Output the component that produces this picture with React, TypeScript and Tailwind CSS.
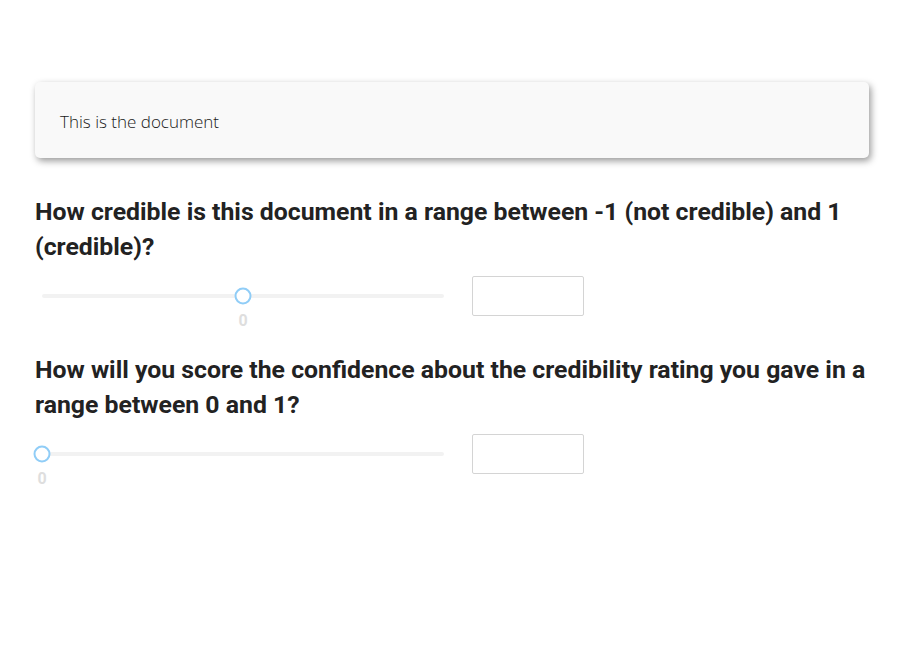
import React from "react";

function Slider({ pct }: { pct: number }) {
  return (
    <div className="relative ml-[7px] h-10 w-[402px] flex items-center">
      <div className="h-[4px] w-full rounded-full bg-[#f2f2f2]" />
      <div
        className="absolute top-1/2 h-[17px] w-[17px] -translate-x-1/2 -translate-y-1/2 rounded-full border-2 border-[#90cdf7] bg-white"
        style={{ left: `${pct}%` }}
      />
      <div
        className="absolute top-[37px] -translate-x-1/2 text-[16px] font-bold leading-4 text-[#dedede]"
        style={{ left: `${pct}%`, fontFamily: "Roboto, sans-serif" }}
      >
        0
      </div>
    </div>
  );
}

function Row({ pct }: { pct: number }) {
  return (
    <div className="flex items-start">
      <Slider pct={pct} />
      <input
        className="ml-[28px] h-10 w-[112px] rounded-[2px] border border-[#d4d4d4] bg-white outline-none"
        type="text"
      />
    </div>
  );
}

export default function App() {
  return (
    <div className="min-h-[651px] w-[902px] bg-white px-[35px] pt-[82px]" style={{ fontFamily: "Roboto, sans-serif" }}>
      <div className="flex h-[76px] w-[834px] items-center rounded-[5px] bg-[#f9f9f9] pl-[25px] pt-[3px] shadow-[2px_3px_7px_rgba(0,0,0,0.4)]">
        <span className="text-[17px] font-light text-[#1a1a1a]" style={{ fontFamily: "'Open Sans', sans-serif" }}>
          This is the document
        </span>
      </div>
      <h2 className="mt-[36px] text-[24.8px] font-bold leading-[35px] text-[#222]">
        How credible is this document in a range between -1 (not credible) and 1 (credible)?
      </h2>
      <div className="mt-[12px]">
        <Row pct={50} />
      </div>
      <h2 className="mt-[36px] text-[24.8px] font-bold leading-[35px] text-[#222]">
        How will you score the confidence about the credibility rating you gave in a range between 0 and 1?
      </h2>
      <div className="mt-[12px]">
        <Row pct={0} />
      </div>
    </div>
  );
}
